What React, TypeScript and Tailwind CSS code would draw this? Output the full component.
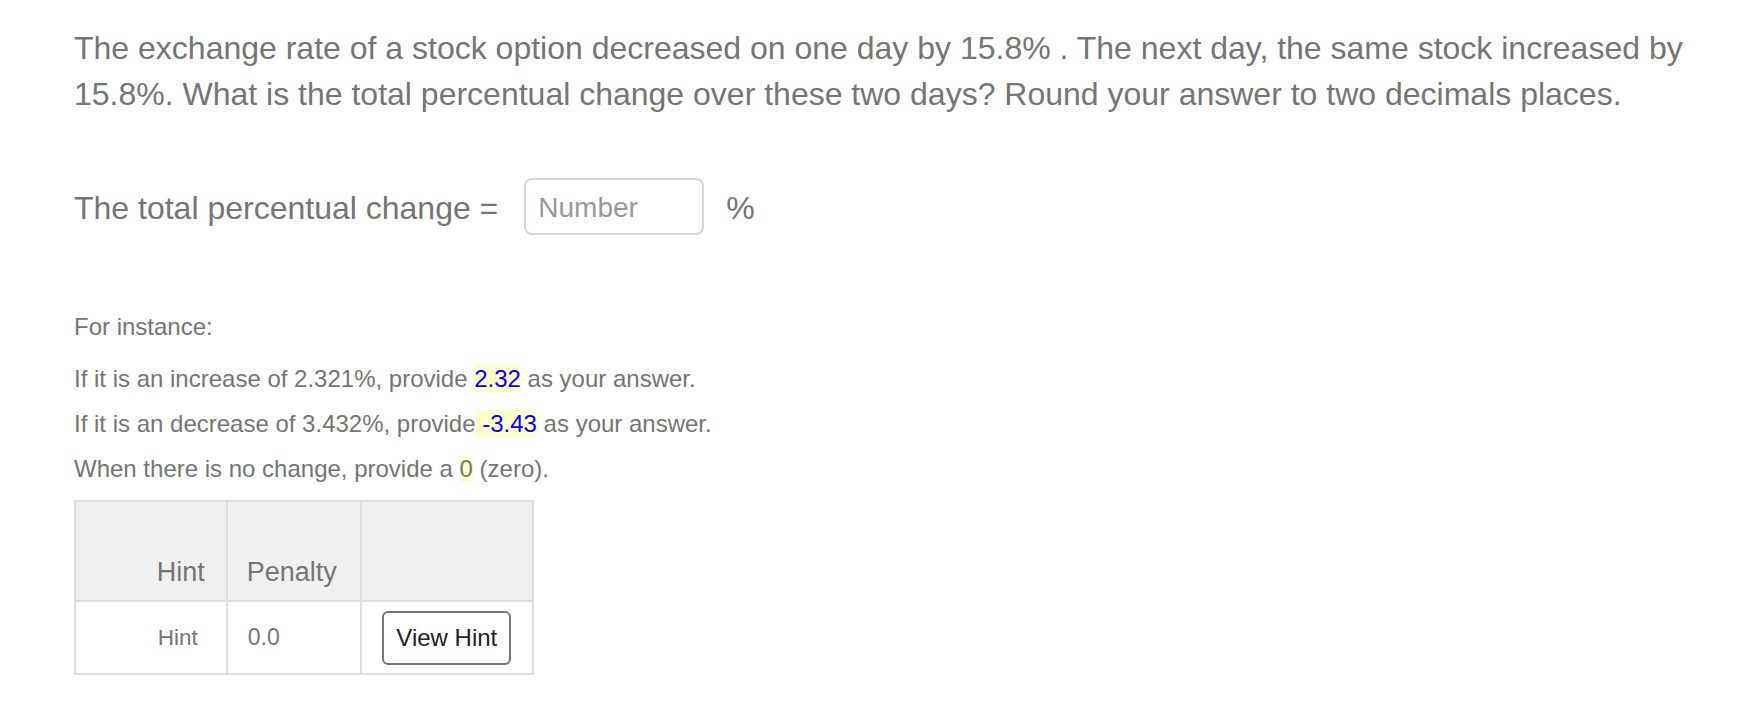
import React from 'react';

const gray = 'text-[#757575]';

const Hl = ({ children, blue = false }: { children: React.ReactNode; blue?: boolean }) => (
  <span className={`bg-[#ffffcc] ${blue ? 'text-[#0000ff]' : ''}`}>{children}</span>
);

export default function App() {
  return (
    <div
      className={`min-h-[728px] bg-white pl-[74px] pr-[40px] pt-[25px] ${gray}`}
      style={{ fontFamily: '"Liberation Sans", Arial, Helvetica, sans-serif' }}
    >
      {/* Question */}
      <p className="text-[32px] leading-[46px]">
        The exchange rate of a stock option decreased on one day by 15.8% . The next day, the same stock increased by
        15.8%. What is the total percentual change over these two days? Round your answer to two decimals places.
      </p>

      {/* Answer line */}
      <div className="mt-[61px] flex items-center text-[32px]">
        <span className="pt-[3px]">The total percentual change =</span>
        <input
          type="text"
          placeholder="Number"
          className="ml-[26px] h-[57px] w-[180px] rounded-[8px] border-2 border-[#d6d6d6] bg-white px-[12px] pt-[2px] text-[28px] text-[#555] outline-none placeholder:text-[#999]"
        />
        <span className="ml-[22px] pt-[3px]">%</span>
      </div>

      {/* Examples */}
      <div className="mt-[69px] text-[24px] leading-[46px]">
        <p>For instance:</p>
        <p className="mt-[6px]">
          If it is an increase of 2.321%, provide <Hl blue>2.32</Hl> as your answer.
        </p>
        <p className="-mt-px">
          If it is an decrease of 3.432%, provide<Hl blue>&nbsp;-3.43</Hl> as your answer.
        </p>
        <p className="-mt-px">
          When there is no change, provide a <Hl>0</Hl> (zero).
        </p>
      </div>

      {/* Hint table */}
      <table className="mt-[8px] w-[460px] border-collapse border-2 border-[#dddddd]">
        <thead>
          <tr className="h-[100px] bg-[#f0f0f0]">
            <th className="w-[153px] border-2 border-[#dddddd] pb-[8px] pr-[21px] text-right align-bottom text-[27px] font-normal">
              Hint
            </th>
            <th className="w-[135px] border-2 border-[#dddddd] pb-[8px] pl-[19px] text-left align-bottom text-[27px] font-normal">
              Penalty
            </th>
            <th className="w-[172px] border-2 border-[#dddddd]"></th>
          </tr>
        </thead>
        <tbody>
          <tr className="h-[73px]">
            <td className="border-2 border-[#dddddd] pr-[28px] text-right align-middle text-[22.5px]">Hint</td>
            <td className="border-2 border-[#dddddd] pl-[20px] text-left align-middle text-[23px]">0.0</td>
            <td className="border-2 border-[#dddddd] pl-[20px] align-middle">
              <button className="h-[54px] w-[129px] rounded-[6px] border-2 border-[#767676] bg-white text-[24px] text-[#222]">
                View Hint
              </button>
            </td>
          </tr>
        </tbody>
      </table>
    </div>
  );
}
